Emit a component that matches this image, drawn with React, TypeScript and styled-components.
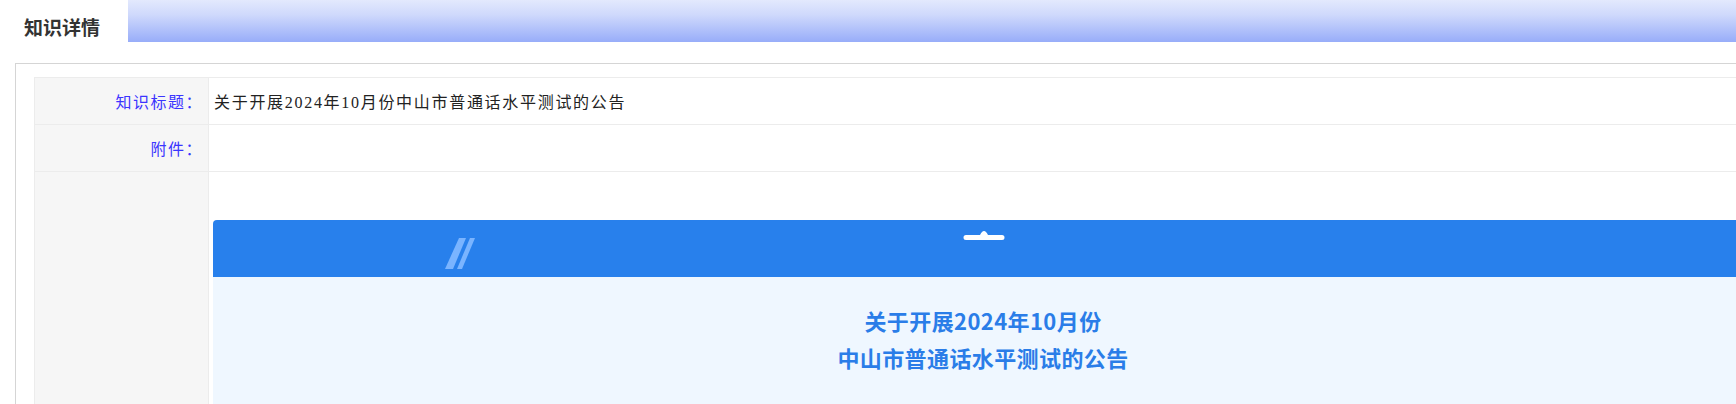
import styled, { createGlobalStyle } from "styled-components";

const GlobalStyle = createGlobalStyle`
  body {
    margin: 0;
    background: #fff;
    overflow: hidden;
    font-family: "Noto Sans CJK SC", "Noto Sans", sans-serif;
  }
`;

const Page = styled.div`
  width: 1736px;
  height: 404px;
  overflow: hidden;
`;

const TabBar = styled.div`
  display: flex;
  height: 42px;
`;

const Tab = styled.div`
  width: 128px;
  box-sizing: border-box;
  padding: 9px 0 0 24px;
  background: #fff;
  color: #333;
  font-size: 19px;
  font-weight: bold;
  line-height: 36px;
`;

const TabStrip = styled.div`
  flex: 1;
  background: linear-gradient(to bottom, #e3e9fd 0%, #cfd9fc 35%, #98adf9 100%);
`;

const Panel = styled.div`
  margin: 21px 0 0 15px;
  width: 1800px;
  border: 1px solid #d5d5d5;
  border-right: none;
  padding: 13px 0 0 18px;
`;

const Table = styled.div`
  border-top: 1px solid #ececec;
  border-left: 1px solid #ececec;
`;

const Row = styled.div<{ $h?: number }>`
  display: grid;
  grid-template-columns: 174px 1fr;
  min-height: ${(p) => p.$h ?? 46}px;
  border-bottom: 1px solid #ececec;
`;

const Label = styled.div`
  background: #f6f6f6;
  border-right: 1px solid #ececec;
  color: #3b35ff;
  font-size: 16px;
  letter-spacing: 1.5px;
  padding-right: 5px;
  display: flex;
  align-items: center;
  justify-content: flex-end;
`;

const Value = styled.div`
  color: #222;
  font-family: "Liberation Serif", "Noto Sans CJK SC", serif;
  font-size: 16px;
  letter-spacing: 1.7px;
  padding-left: 5px;
  display: flex;
  align-items: center;
`;

const ContentCell = styled.div`
  padding: 48px 0 0 4px;
`;

const Poster = styled.div`
  width: 1540px;
  background: #eff7ff;
  border-radius: 4px 4px 0 0;
  overflow: hidden;
`;

const PosterHead = styled.div`
  position: relative;
  height: 57px;
  background: #2880ec;
`;

const Slashes = styled.svg`
  position: absolute;
  left: 231px;
  top: 17px;
`;

const Pill = styled.svg`
  position: absolute;
  left: 748px;
  top: 8px;
`;

const PosterTitle = styled.div`
  padding: 25px 0 60px;
  text-align: center;
  color: #2a7de8;
  font-size: 22px;
  letter-spacing: 0.4px;
  font-weight: bold;
  line-height: 37px;
`;

export default function App() {
  return (
    <Page>
      <GlobalStyle />
      <TabBar>
        <Tab>知识详情</Tab>
        <TabStrip />
      </TabBar>
      <Panel>
        <Table>
          <Row>
            <Label>知识标题：</Label>
            <Value>关于开展2024年10月份中山市普通话水平测试的公告</Value>
          </Row>
          <Row>
            <Label>附件：</Label>
            <Value />
          </Row>
          <Row $h={300}>
            <Label />
            <ContentCell>
              <Poster>
                <PosterHead>
                  <Slashes width="34" height="33" viewBox="0 0 34 33">
                    <polygon points="1,32 9,32 22,1 15,1" fill="#7ab4ff" />
                    <polygon points="13,32 18,32 31,1 26,1" fill="#7ab4ff" />
                  </Slashes>
                  <Pill width="46" height="14" viewBox="0 0 46 14">
                    <path
                      d="M5 7 H19 Q21 3 23 3 Q25 3 27 7 H41 A2.5 2.5 0 0 1 41 12 H5 A2.5 2.5 0 0 1 5 7 Z"
                      fill="#fff"
                    />
                  </Pill>
                </PosterHead>
                <PosterTitle>
                  关于开展2024年10月份
                  <br />
                  中山市普通话水平测试的公告
                </PosterTitle>
              </Poster>
            </ContentCell>
          </Row>
        </Table>
      </Panel>
    </Page>
  );
}
